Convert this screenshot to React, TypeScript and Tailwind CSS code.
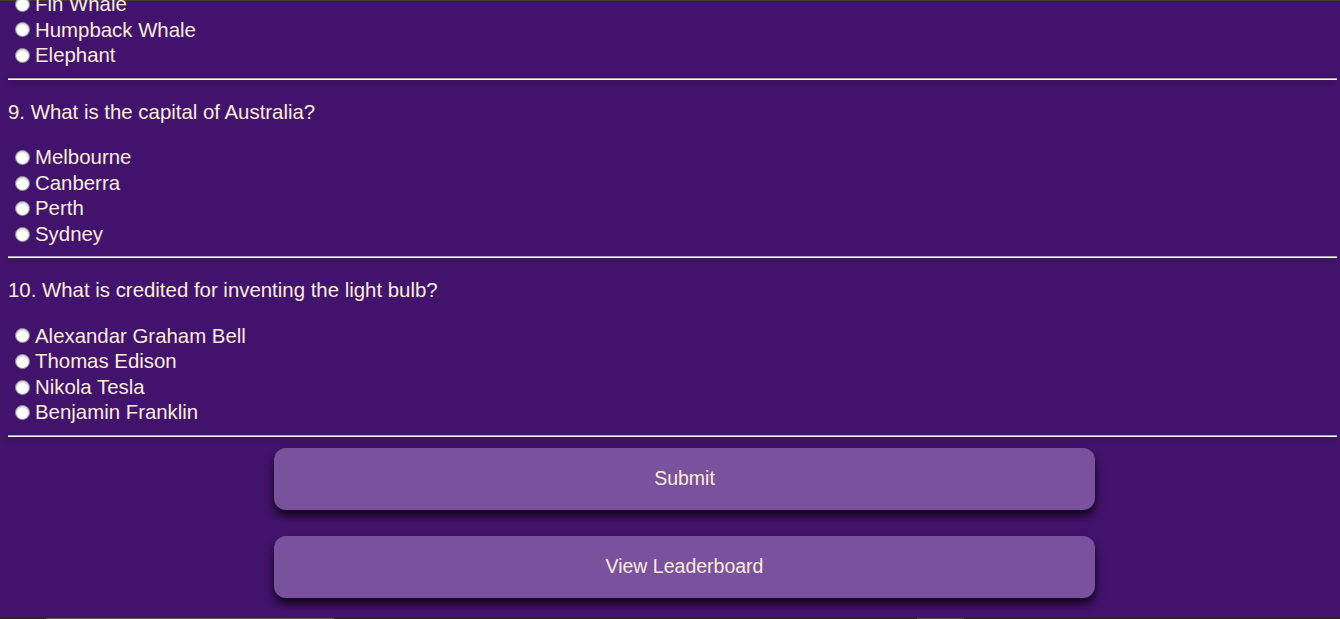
const questions = [
  {
    n: 9,
    text: "What is the capital of Australia?",
    options: ["Melbourne", "Canberra", "Perth", "Sydney"],
  },
  {
    n: 10,
    text: "What is credited for inventing the light bulb?",
    options: ["Alexandar Graham Bell", "Thomas Edison", "Nikola Tesla", "Benjamin Franklin"],
  },
]

function Option({ name, label }: { name: string; label: string }) {
  return (
    <label className="flex items-center h-[25.6px] pl-[7px]">
      <input
        type="radio"
        name={name}
        className="appearance-none w-[15px] h-[15px] rounded-full bg-white border border-[#8a8a8a] shadow-[inset_0_1px_2px_rgba(0,0,0,0.25)]"
      />
      <span className="ml-[5px]">{label}</span>
    </label>
  )
}

function Divider() {
  return <div className="h-[2px] border-t border-[#a8a8a8] bg-white shadow-[0_3px_6px_rgba(0,0,0,0.35)]" />
}

export default function App() {
  return (
    <div
      className="h-[619px] overflow-hidden flex flex-col bg-[#42136c] text-[#fcecdc] text-[20.4px]"
      style={{ fontFamily: '"Liberation Sans", Arial, sans-serif' }}
    >
      <div className="h-px bg-[#3d3d3d]" />
      <div className="flex-1 ml-2 mr-[3px]">
        <div className="-mt-[9.5px]">
          {["Fin Whale", "Humpback Whale", "Elephant"].map((o) => (
            <Option key={o} name="q8" label={o} />
          ))}
        </div>
        <div className="mt-[9.5px]">
          <Divider />
        </div>
        {questions.map((q) => (
          <div key={q.n}>
            <p className="mt-[21px] leading-[23px]">
              {q.n}. {q.text}
            </p>
            <div className="mt-[21px]">
              {q.options.map((o) => (
                <Option key={o} name={"q" + q.n} label={o} />
              ))}
            </div>
            <div className="mt-[9px]">
              <Divider />
            </div>
          </div>
        ))}
        <button className="block mt-[11.5px] ml-[266px] w-[821px] h-[62px] rounded-[12px] bg-[#7a519d] text-[19.5px] shadow-[0_6px_10px_rgba(0,0,0,0.75)]">
          Submit
        </button>
        <button className="block mt-[26px] ml-[266px] w-[821px] h-[62px] rounded-[12px] bg-[#7a519d] text-[19.5px] shadow-[0_6px_10px_rgba(0,0,0,0.75)]">
          View Leaderboard
        </button>
      </div>
      <div className="h-px bg-[#232323] flex">
        <div className="ml-[46px] w-[288px] bg-[#5a5a5a]" />
        <div className="ml-[583px] w-[47px] bg-[#4a4a4a]" />
      </div>
    </div>
  )
}
